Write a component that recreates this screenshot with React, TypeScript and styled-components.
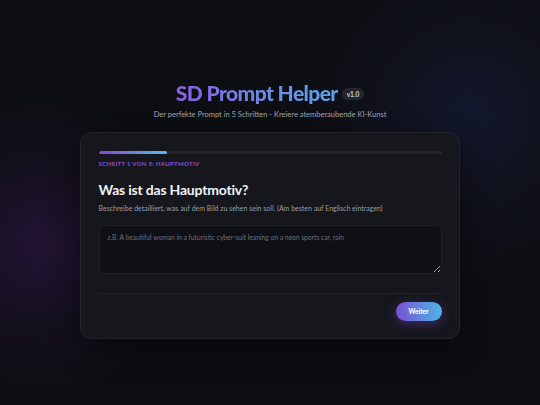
import React from "react";
import styled, { createGlobalStyle } from "styled-components";

const Global = createGlobalStyle`
  html, body { margin: 0; padding: 0; background: #0d0e12; }
  * { box-sizing: border-box; }
`;

const Page = styled.div`
  width: 540px;
  height: 405px;
  overflow: hidden;
  display: flex;
  flex-direction: column;
  align-items: center;
  padding-top: 80px;
  font-family: Lato, "Open Sans", sans-serif;
  background:
    radial-gradient(circle at 40px 245px, rgba(105, 40, 170, 0.22) 0, rgba(105, 40, 170, 0.08) 80px, rgba(105, 40, 170, 0) 150px),
    radial-gradient(circle at 470px 115px, rgba(45, 60, 150, 0.2) 0, rgba(45, 60, 150, 0.07) 90px, rgba(45, 60, 150, 0) 170px),
    #0d0e12;
`;

const TitleRow = styled.div`
  display: flex;
  align-items: center;
  gap: 4px;
  height: 26px;
`;

const Title = styled.h1`
  margin: 0;
  font-size: 21px;
  font-weight: 900;
  letter-spacing: -0.6px;
  line-height: 26px;
  background: linear-gradient(90deg, #8b5fe6 0%, #6f86e6 50%, #5aa4ea 100%);
  -webkit-background-clip: text;
  background-clip: text;
  color: transparent;
`;

const Badge = styled.span`
  font-size: 6.5px;
  font-weight: 700;
  color: #c9ccd4;
  background: #24262d;
  border-radius: 6px;
  padding: 2.5px 5px;
  margin-top: 2px;
`;

const Subtitle = styled.p`
  margin: 3px 0 0;
  font-size: 7.5px;
  line-height: 11px;
  color: #a2a5ad;
`;

const Card = styled.div`
  margin-top: 12px;
  width: 380px;
  padding: 18px 17.5px 17px;
  border-radius: 12px;
  background: rgba(22, 24, 29, 0.96);
  border: 1px solid rgba(255, 255, 255, 0.06);
  box-shadow: 0 10px 30px rgba(0, 0, 0, 0.45);
  display: flex;
  flex-direction: column;
`;

const Track = styled.div`
  height: 3px;
  border-radius: 2px;
  background: #22252c;
  overflow: hidden;
`;

const Fill = styled.div`
  height: 100%;
  border-radius: 2px;
  background: linear-gradient(90deg, #8a45c9, #4fc0e8);
`;

const StepLabel = styled.div`
  margin-top: 5px;
  font-size: 6px;
  line-height: 9px;
  font-weight: 900;
  letter-spacing: 0.3px;
  color: #8a48c4;
`;

const Heading = styled.h2`
  margin: 11.5px 0 0;
  font-size: 14px;
  line-height: 20px;
  font-weight: 700;
  letter-spacing: -0.2px;
  color: #f1f2f4;
`;

const Desc = styled.p`
  margin: 3px 0 0;
  font-size: 7px;
  line-height: 10px;
  color: #9a9da5;
`;

const Area = styled.textarea`
  margin-top: 12.5px;
  height: 48.5px;
  width: 100%;
  resize: vertical;
  background: #0f1015;
  border: 1px solid rgba(255, 255, 255, 0.07);
  border-radius: 6px;
  padding: 7px 8px;
  font-family: Lato, "Open Sans", sans-serif;
  font-size: 6.7px;
  color: #d6d8dd;
  outline: none;
  &::placeholder { color: #6c6f78; }
`;

const Divider = styled.div`
  margin-top: 19px;
  height: 1px;
  background: rgba(255, 255, 255, 0.06);
`;

const Footer = styled.div`
  margin-top: 8.5px;
  display: flex;
  justify-content: flex-end;
`;

const Button = styled.button`
  width: 46px;
  height: 19px;
  border: none;
  border-radius: 10px;
  background: linear-gradient(90deg, #7a4fd2, #4fb4e8);
  color: #fff;
  font-family: Lato, "Open Sans", sans-serif;
  font-size: 6.5px;
  font-weight: 900;
  box-shadow: 0 3px 12px rgba(130, 70, 220, 0.4);
  padding: 0;
`;

export default function App() {
  const progress = 20;
  return (
    <>
      <Global />
      <Page>
        <TitleRow>
          <Title>SD Prompt Helper</Title>
          <Badge>v1.0</Badge>
        </TitleRow>
        <Subtitle>Der perfekte Prompt in 5 Schritten - Kreiere atemberaubende KI-Kunst</Subtitle>
        <Card>
          <Track>
            <Fill style={{ width: `${progress}%` }} />
          </Track>
          <StepLabel>SCHRITT 1 VON 5: HAUPTMOTIV</StepLabel>
          <Heading>Was ist das Hauptmotiv?</Heading>
          <Desc>Beschreibe detailliert, was auf dem Bild zu sehen sein soll. (Am besten auf Englisch eintragen)</Desc>
          <Area placeholder="z.B. A beautiful woman in a futuristic cyber-suit leaning on a neon sports car, rain" />
          <Divider />
          <Footer>
            <Button>Weiter</Button>
          </Footer>
        </Card>
      </Page>
    </>
  );
}
